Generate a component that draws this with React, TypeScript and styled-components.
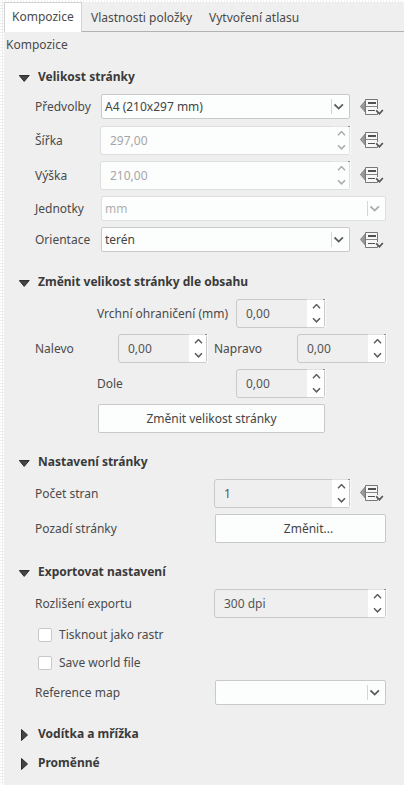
import React from 'react';
import styled, { createGlobalStyle } from 'styled-components';

const GlobalStyle = createGlobalStyle`
  * { box-sizing: border-box; }
  body {
    margin: 0;
    background: #efefef;
    color: #4a4a4a;
    font: 12px/16px 'Noto Sans', sans-serif;
  }
`;

const Panel = styled.div`
  width: 404px;
  height: 785px;
  overflow: hidden;
  padding: 2px 0 0 4px;
  background:
    linear-gradient(#efefef, #efefef) 4px 2px no-repeat,
    radial-gradient(circle at 1px 1px, #fff 0.8px, transparent 1px) 0 0 / 3px 3px,
    #efefef;
`;

const Tabs = styled.div`
  display: flex;
  height: 30px;
`;

const Tab = styled.div<{ $width: number; $active?: boolean }>`
  width: ${p => p.$width}px;
  white-space: nowrap;
  padding: ${p => (p.$active ? '6px 0 0 7px' : '8px 0 0 9px')};
  background: ${p => (p.$active ? '#fff' : 'transparent')};
  border: ${p => (p.$active ? '1px solid #d3d3d3' : '0 solid #b2b2b2')};
  border-bottom: ${p => (p.$active ? '0' : '1px solid #b2b2b2')};
`;

const PanelTitle = styled.div`
  height: 34px;
  padding: 5px 0 0 2px;
`;

const SectionTitle = styled.div`
  display: flex;
  align-items: center;
  height: 22px;
  padding-left: 15px;
  font-weight: 700;
  color: #3a3a3a;
  svg { flex: none; width: 12px; height: 14px; margin: 2px 7px 0 0; }
`;

const Fields = styled.div<{ $top: number; $bottom: number }>`
  display: flex;
  flex-direction: column;
  gap: 6px;
  padding: ${p => p.$top}px 0 ${p => p.$bottom}px 31px;
`;

const Row = styled.div<{ $h?: number; $gap?: number }>`
  display: flex;
  align-items: center;
  height: ${p => p.$h ?? 29}px;
  margin-top: ${p => p.$gap ?? 0}px;
`;

const Label = styled.label<{ $width: number; $indent?: number }>`
  flex: none;
  width: ${p => p.$width}px;
  padding-left: ${p => p.$indent ?? 0}px;
  white-space: nowrap;
`;

const Combo = styled.div<{ $width: number; $disabled?: boolean }>`
  display: flex;
  align-items: center;
  width: ${p => p.$width}px;
  height: 25px;
  margin-left: 1px;
  padding-left: 3px;
  background: #fcfefd;
  border: 1px solid ${p => (p.$disabled ? '#dfdfdf' : '#c9c9c9')};
  border-radius: 2px;
  color: ${p => (p.$disabled ? '#b0b0b0' : '#444')};
  span { flex: 1; }
`;

const ComboArrow = styled.div<{ $disabled?: boolean }>`
  width: 18px;
  height: 15px;
  border-left: 1px solid #d6d6d6;
  color: ${p => (p.$disabled ? '#aaa' : '#5a5a5a')};
  svg { display: block; margin: 4px 0 0 2px; }
`;

const Spin = styled.div<{ $width: number; $disabled?: boolean }>`
  position: relative;
  display: flex;
  flex: none;
  align-items: center;
  width: ${p => p.$width}px;
  height: 29px;
  padding-left: 9px;
  background: ${p => (p.$disabled ? '#fcfdfd' : '#efefef')};
  border: 1px solid ${p => (p.$disabled ? '#dedede' : '#c9c9c9')};
  border-radius: 3px;
  color: ${p => (p.$disabled ? '#a6a6a6' : '#555')};
  span { flex: 1; }
  &::after {
    content: '';
    position: absolute;
    top: -1px;
    right: -2px;
    width: 3px;
    height: 29px;
    border-right: 1px solid #fafafa;
    background: linear-gradient(#8c8c8c, #8c8c8c) 1px 0 / 2px 1px no-repeat;
  }
`;

const Steppers = styled.div<{ $disabled?: boolean }>`
  display: flex;
  flex-direction: column;
  justify-content: space-between;
  width: 17px;
  height: 29px;
  margin: -1px 0;
  padding: 4px 0 4px 5px;
  background: ${p => (p.$disabled ? '#fcfdfd' : '#fff')};
  border-top: 1px solid ${p => (p.$disabled ? '#e4e4e4' : '#e0e0e0')};
  border-bottom: 1px solid ${p => (p.$disabled ? '#dedede' : '#cdcdcd')};
  color: ${p => (p.$disabled ? '#aaa' : '#5c5c5c')};
  svg { display: block; }
`;

const Button = styled.button<{ $width: number; $indent?: number; $shift?: number }>`
  width: ${p => p.$width}px;
  height: 29px;
  margin-left: ${p => p.$indent ?? 0}px;
  padding: 0 0 0 ${p => p.$shift ?? 0}px;
  background: #fcfefd;
  border: 1px solid #c9c9c9;
  border-radius: 2px;
  color: #444;
  font: inherit;
`;

const CheckRow = styled.label`
  display: flex;
  align-items: center;
  gap: 7px;
  height: 22px;
  padding-left: 3px;
`;

const CheckBox = styled.span`
  width: 14px;
  height: 14px;
  background: #fff;
  border: 1px solid #c9c9c9;
  border-radius: 2px;
`;

const OverrideIcon = styled.svg<{ $low?: boolean }>`
  flex: none;
  margin: ${p => (p.$low ? '1px 0 0 10px' : '0 0 1px 10px')};
`;

function Override({ low }: { low?: boolean }) {
  return (
    <OverrideIcon $low={low} width="24" height="18" viewBox="0 0 24 18">
      <path d="M.4 8.5 5.2 3v11z" fill="#999a9b" stroke="#777" strokeWidth=".8" />
      <path d="M5.5 1.5h12v15h-12z" fill="#f7f7f7" stroke="#777" />
      <path d="M5.5 8.5h12" stroke="#888" />
      <path d="M8 5h8" stroke="#505050" strokeWidth="2" />
      <path d="M8 12.5h7" stroke="#505050" />
      <path d="M16 11h3v4h-3z" fill="#efefef" />
      <path d="m16.2 12.3 3.3 3.5 3.3-3.8" fill="none" stroke="#555" strokeWidth="1.7" />
    </OverrideIcon>
  );
}

function Select({ width, value, disabled }: { width: number; value?: string; disabled?: boolean }) {
  return (
    <Combo $width={width} $disabled={disabled}>
      <span>{value}</span>
      <ComboArrow $disabled={disabled}>
        <svg width="10" height="8" viewBox="0 0 10 8">
          <path d="m.5 1.4 4.2 4.2 4.2-4.2" fill="none" stroke="currentColor" strokeWidth="1.8" />
        </svg>
      </ComboArrow>
    </Combo>
  );
}

function SpinBox({ width, value, disabled }: { width: number; value: string; disabled?: boolean }) {
  return (
    <Spin $width={width} $disabled={disabled}>
      <span>{value}</span>
      <Steppers $disabled={disabled}>
        <svg width="9" height="6" viewBox="0 0 9 6">
          <path d="M1 4.2 4.5.6 8 4.2" fill="none" stroke="currentColor" strokeWidth="1.5" />
        </svg>
        <svg width="9" height="6" viewBox="0 0 9 6">
          <path d="m1 1.2 3.5 3.6L8 1.2" fill="none" stroke="currentColor" strokeWidth="1.5" />
        </svg>
      </Steppers>
    </Spin>
  );
}

function Heading({ text, closed }: { text: string; closed?: boolean }) {
  return (
    <SectionTitle>
      <svg viewBox="0 0 12 14">
        <path d={closed ? 'M2.5 1.5 8.5 7l-6 5.5z' : 'M.3 4.5h9.9L5.2 10.4z'} fill="#444" stroke="#2d2d2d" />
      </svg>
      {text}
    </SectionTitle>
  );
}

export default function App() {
  return (
    <>
      <GlobalStyle />
      <Panel>
        <Tabs>
          <Tab $width={78} $active>Kompozice</Tab>
          <Tab $width={118}>Vlastnosti položky</Tab>
          <Tab $width={204}>Vytvoření atlasu</Tab>
        </Tabs>
        <PanelTitle>Kompozice</PanelTitle>

        <Heading text="Velikost stránky" />
        <Fields $top={6} $bottom={19}>
          <Row $h={25}>
            <Label $width={65}>Předvolby</Label>
            <Select width={249} value="A4 (210x297 mm)" />
            <Override low />
          </Row>
          <Row $gap={1}>
            <Label $width={65}>Šířka</Label>
            <SpinBox width={250} value="297,00" disabled />
            <Override />
          </Row>
          <Row>
            <Label $width={65}>Výška</Label>
            <SpinBox width={250} value="210,00" disabled />
            <Override />
          </Row>
          <Row $h={25}>
            <Label $width={65}>Jednotky</Label>
            <Select width={285} value="mm" disabled />
          </Row>
          <Row $h={25}>
            <Label $width={65}>Orientace</Label>
            <Select width={249} value="terén" />
            <Override low />
          </Row>
        </Fields>

        <Heading text="Změnit velikost stránky dle obsahu" />
        <Fields $top={6} $bottom={18}>
          <Row>
            <Label $width={201} $indent={62}>Vrchní ohraničení (mm)</Label>
            <SpinBox width={89} value="0,00" />
          </Row>
          <Row>
            <Label $width={83}>Nalevo</Label>
            <SpinBox width={89} value="0,00" />
            <Label $width={90} $indent={7}>Napravo</Label>
            <SpinBox width={89} value="0,00" />
          </Row>
          <Row>
            <Label $width={201} $indent={62}>Dole</Label>
            <SpinBox width={89} value="0,00" />
          </Row>
          <Row>
            <Button $width={227} $indent={63}>Změnit velikost stránky</Button>
          </Row>
        </Fields>

        <Heading text="Nastavení stránky" />
        <Fields $top={6} $bottom={18}>
          <Row>
            <Label $width={179}>Počet stran</Label>
            <SpinBox width={136} value="1" />
            <Override />
          </Row>
          <Row>
            <Label $width={179}>Pozadí stránky</Label>
            <Button $width={171} $indent={1} $shift={16}>Změnit...</Button>
          </Row>
        </Fields>

        <Heading text="Exportovat nastavení" />
        <Fields $top={6} $bottom={18}>
          <Row>
            <Label $width={179}>Rozlišení exportu</Label>
            <SpinBox width={172} value="300 dpi" />
          </Row>
          <CheckRow><CheckBox />Tisknout jako rastr</CheckRow>
          <CheckRow><CheckBox />Save world file</CheckRow>
          <Row $h={25}>
            <Label $width={179}>Reference map</Label>
            <Select width={171} />
          </Row>
        </Fields>

        <Heading text="Vodítka a mřížka" closed />
        <Fields $top={7} $bottom={0} />
        <Heading text="Proměnné" closed />
      </Panel>
    </>
  );
}
